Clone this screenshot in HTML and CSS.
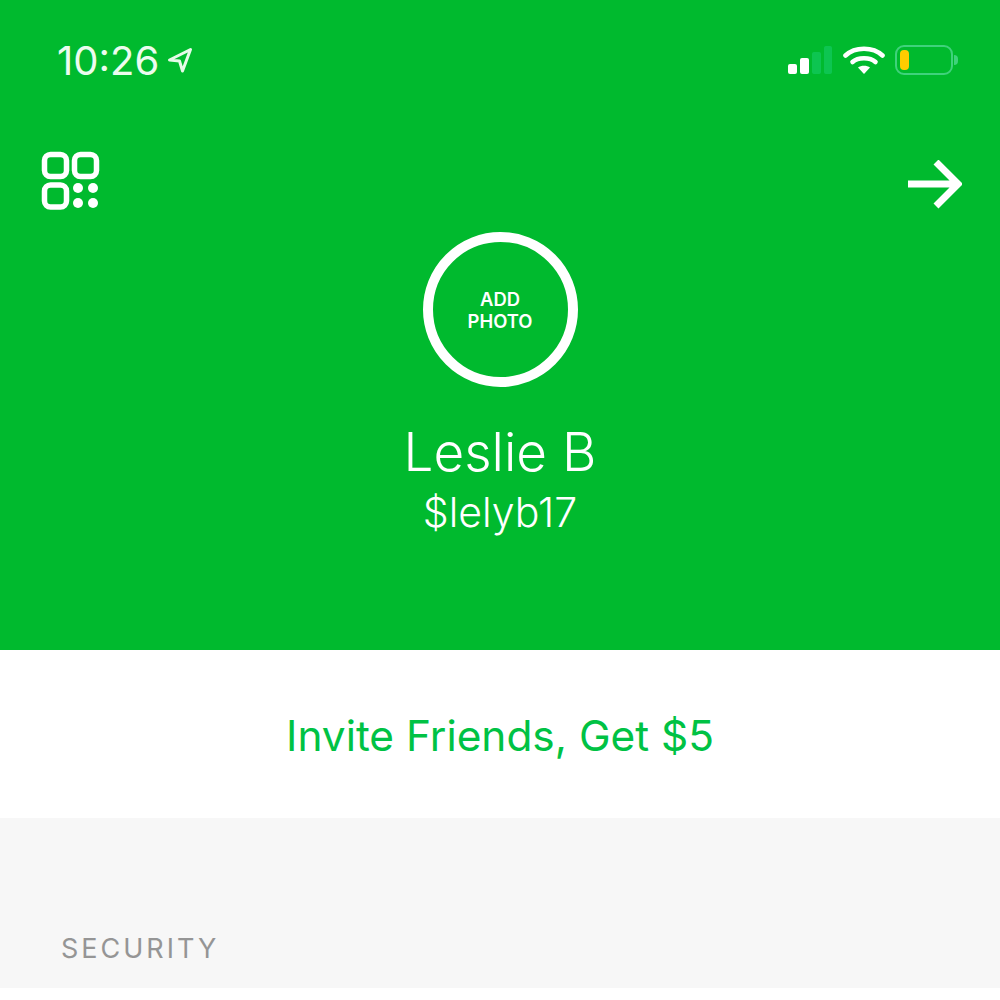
FILE: index.html
```html
<!DOCTYPE html>
<html lang="en">

<head>
    <meta charset="UTF-8">
    <title>Profile</title>
    <link rel="stylesheet" href="styles.css">
</head>

<body>
    <div class="hero">
        <div class="status-bar">
            <div class="status-left">
                <span class="time">10:26</span>
                <svg class="location" width="26" height="28" viewBox="0 0 26 28">
                    <path d="M2.5 14 L23.5 3.5 L15.5 25 L12.500 15 Z" fill="none" stroke="#e6fbe9" stroke-width="3" stroke-linejoin="round" />
                </svg>
            </div>
            <div class="status-right">
                <svg width="46" height="30" viewBox="0 0 46 30">
                    <rect x="1" y="19" width="9" height="10" rx="2" fill="#fff" />
                    <rect x="13" y="13" width="9" height="16" rx="2" fill="#fff" />
                    <rect x="25" y="7" width="9" height="22" rx="2" fill="#10c85a" opacity=".8" />
                    <rect x="37" y="1" width="8" height="28" rx="2" fill="#10c85a" opacity=".8" />
                </svg>
                <svg width="42" height="30" viewBox="0 0 42 30">
                    <path d="M2.5 10.500 C12 1.500 30 1.500 39.500 10.500" fill="none" stroke="#fff" stroke-width="4.600" stroke-linecap="round" />
                    <path d="M9.500 17 C15 12 27 12 32.500 17" fill="none" stroke="#fff" stroke-width="4.600" stroke-linecap="round" />
                    <path d="M15 22.500 C18 20 24 20 27 22.500 L21 29 Z" fill="#fff" />
                </svg>
                <div class="battery">
                    <div class="battery-body"><div class="battery-level"></div></div>
                    <div class="battery-cap"></div>
                </div>
            </div>
        </div>

        <div class="toolbar">
            <svg width="60" height="60" viewBox="0 0 60 60">
                <g fill="none" stroke="#fff" stroke-width="5.500">
                    <rect x="3.500" y="3.500" width="22" height="22" rx="6" />
                    <rect x="33.500" y="3.500" width="22" height="22" rx="6" />
                    <rect x="3.500" y="34" width="22" height="22" rx="6" />
                </g>
                <g fill="#fff">
                    <circle cx="37" cy="37" r="5" />
                    <circle cx="52" cy="37" r="5" />
                    <circle cx="37" cy="52" r="5" />
                    <circle cx="52" cy="52" r="5" />
                </g>
            </svg>
            <svg class="arrow" width="54" height="50" viewBox="0 0 54 50">
                <path d="M0 24 H49 M28 2 L50 24 L28 46" fill="none" stroke="#fff" stroke-width="7" />
            </svg>
        </div>

        <div class="profile">
            <div class="avatar">ADD<br>PHOTO</div>
            <div class="name">Leslie B</div>
            <div class="cashtag">$lelyb17</div>
        </div>
    </div>

    <div class="invite">Invite Friends, Get $5</div>

    <div class="section">
        <div class="section-title">SECURITY</div>
    </div>
</body>

</html>
```

FILE: styles.css
```css
html,
body {
    margin: 0;
    background-color: #fff;
}

body {
    height: 1000px;
    overflow: hidden;
    font-family: "Inter", "Liberation Sans", sans-serif;
}

.hero {
    height: 650px;
    box-sizing: border-box;
    padding: 40px 40px 0 41px;
    background-color: #00ba2e;
    color: #fff;
}

.status-bar {
    display: flex;
    justify-content: space-between;
    align-items: center;
    height: 40px;
    padding-left: 16px;
}

.status-left {
    display: flex;
    align-items: center;
    gap: 8px;
}

.time {
    font-size: 40px;
    color: #ecfcef;
}

.status-right {
    display: flex;
    align-items: center;
    gap: 10px;
}

.battery {
    display: flex;
    align-items: center;
    gap: 1px;
    margin-right: 2px;
}

.battery-body {
    box-sizing: border-box;
    width: 58px;
    height: 30px;
    padding: 3px;
    border: 2px solid #3fd27c;
    border-radius: 9px;
}

.battery-level {
    width: 9px;
    height: 20px;
    border-radius: 4px;
    background-color: #ffcc00;
}

.battery-cap {
    width: 4px;
    height: 10px;
    border-radius: 0 4px 4px 0;
    background-color: #3fd27c;
}

.toolbar {
    display: flex;
    justify-content: space-between;
    align-items: center;
    margin-top: 70px;
    height: 62px;
    margin-right: -2px;
}

.arrow {
    margin-top: 8px;
}

.profile {
    display: flex;
    flex-direction: column;
    align-items: center;
    margin-top: 20px;
    margin-left: -1px;
}

.avatar {
    display: flex;
    align-items: center;
    justify-content: center;
    box-sizing: border-box;
    width: 155px;
    height: 155px;
    border: 10px solid #fff;
    border-radius: 50%;
    font-size: 18.4px;
    font-weight: 600;
    line-height: 22px;
    text-align: center;
}

.name {
    margin-top: 35px;
    font-size: 53px;
    font-weight: 350;
    line-height: 60px;
}

.cashtag {
    margin-top: 7px;
    font-size: 41px;
    font-weight: 350;
    line-height: 46px;
}

.invite {
    height: 168px;
    line-height: 172px;
    text-align: center;
    font-size: 42.4px;
    font-weight: 400;
    color: #00c244;
}

.section {
    height: 170px;
    box-sizing: border-box;
    padding: 114px 0 0 61px;
    background-color: #f7f7f7;
}

.section-title {
    font-size: 27px;
    line-height: 34px;
    letter-spacing: 3px;
    color: #959595;
}
```
